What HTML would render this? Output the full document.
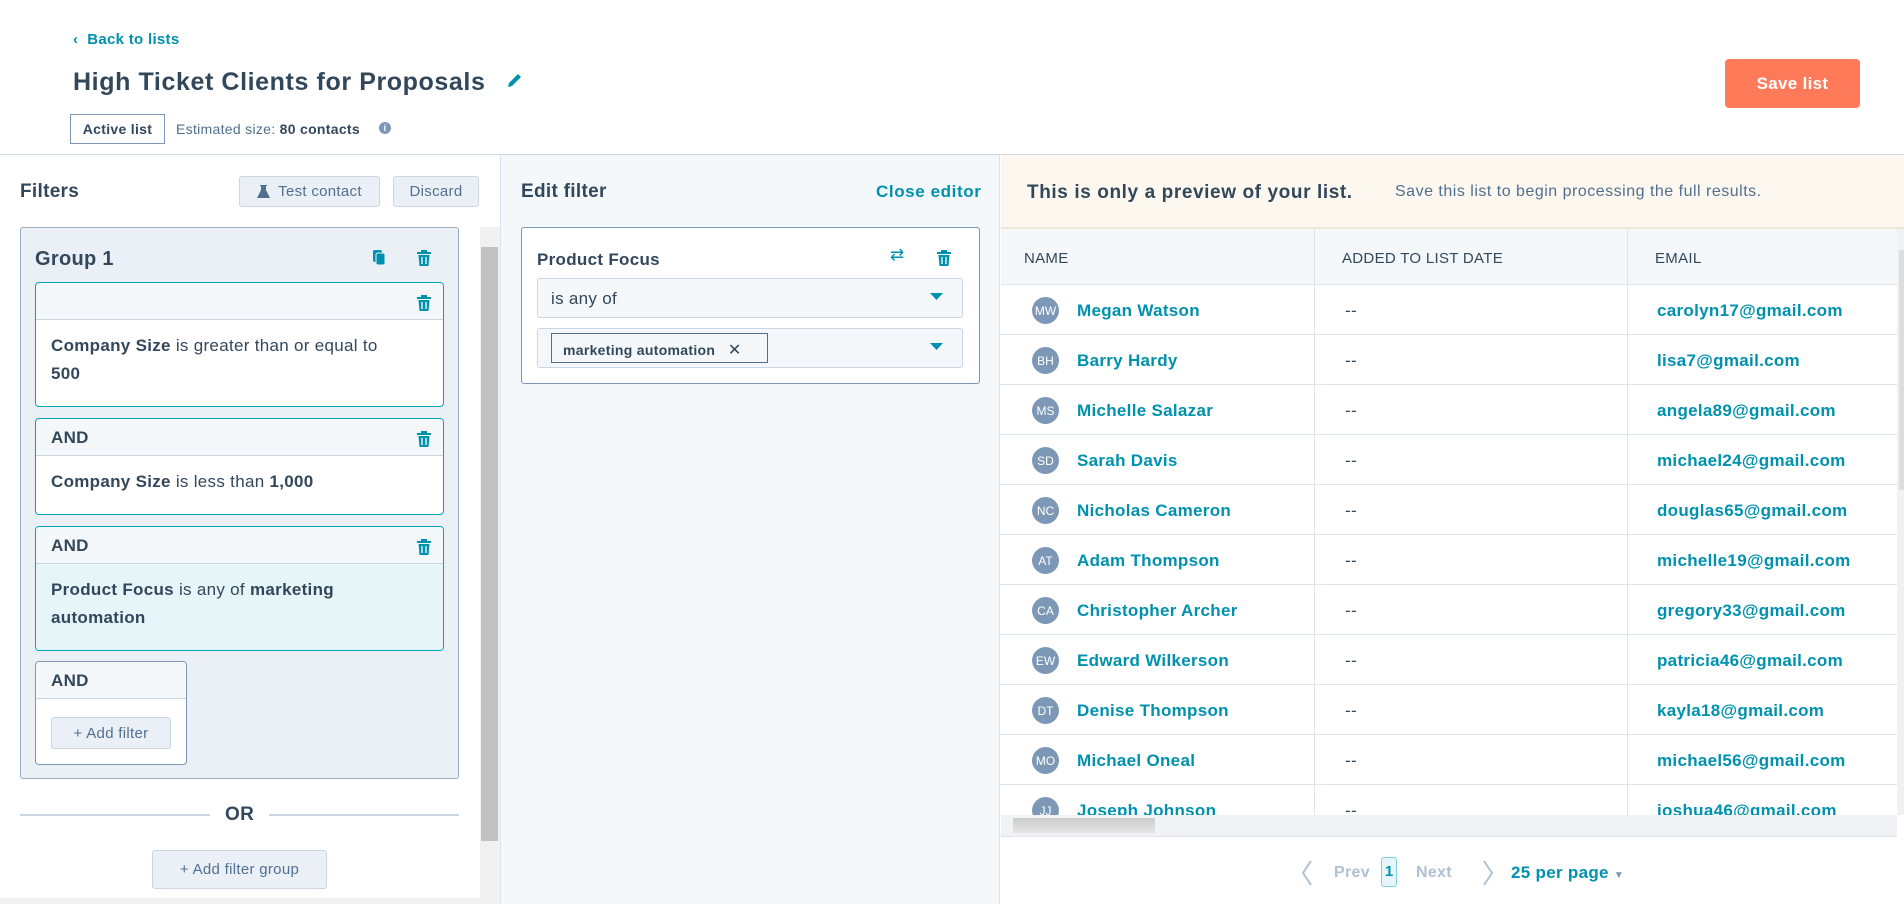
<!DOCTYPE html>
<html><head><meta charset="utf-8"><style>
*{box-sizing:border-box;margin:0;padding:0}
body{width:1904px;height:904px;overflow:hidden;background:#fff;font-family:"Liberation Sans",sans-serif;color:#33475b;position:relative;letter-spacing:0.3px}
.a{position:absolute}
.b{font-weight:bold}
.teal{color:#0091ae}
.btn{position:absolute;background:#eaf0f6;border:1px solid #cbd6e2;border-radius:3px;color:#516f90;font-size:15px;display:flex;align-items:center;justify-content:center;gap:8px}
.card{position:absolute;border:1px solid #00a4bd;border-radius:4px;background:#fff;overflow:hidden}
.card .h{height:37px;background:#f5f8fa;border-bottom:1px solid #cbd6e2;font-weight:bold;font-size:17px;padding:2px 0 0 15px;display:flex;align-items:center;justify-content:space-between}
.card .bd{padding:14px 15px;font-size:17px;line-height:28px}
.trash{width:14px;height:17px;margin-right:12px}
.row{position:absolute;left:1000px;width:897px;height:50px;border-bottom:1px solid #dfe3eb;font-size:17px}
.row .av{position:absolute;left:32px;top:12px;width:27px;height:27px;border-radius:50%;background:#7c98b6;color:#fff;font-size:12px;letter-spacing:0;display:flex;align-items:center;justify-content:center}
.row .n{position:absolute;left:77px;top:16px;font-weight:bold;color:#0091ae}
.row .d{position:absolute;left:345px;top:16px;color:#33475b}
.row .e{position:absolute;left:657px;top:16px;font-weight:bold;color:#0091ae}
.vl{position:absolute;top:229px;width:1px;height:586px;background:#dfe3eb}
</style></head><body>
<svg width="0" height="0" style="position:absolute"><defs>
<symbol id="tr" viewBox="0 0 14 17"><path d="M4 1h6v2h4v2H0V3h4z M1.5 6h11l-1 11h-9z" fill="#0091ae"/><path d="M5 8v7M9 8v7" stroke="#fff" stroke-width="1.3"/></symbol>
</defs></svg>

<!-- header -->
<div class="a teal b" style="left:73px;top:31px;font-size:15px">‹&nbsp;&nbsp;Back to lists</div>
<div class="a b" style="left:73px;top:68px;font-size:25px;color:#33475b;letter-spacing:0.6px">High Ticket Clients for Proposals</div>
<svg class="a" style="left:506px;top:72px" width="17" height="17" viewBox="0 0 17 17"><path d="M2 15l1-4 9-9 3 3-9 9z" fill="#0091ae"/></svg>
<div class="a" style="left:70px;top:114px;width:95px;height:30px;border:1px solid #7c98b6;font-size:14px;font-weight:bold;display:flex;align-items:center;justify-content:center">Active list</div>
<div class="a" style="left:176px;top:121px;font-size:14px;color:#516f90">Estimated size: <b style="color:#33475b">80 contacts</b></div>
<div class="a" style="left:379px;top:122px;width:12px;height:12px;border-radius:50%;background:#7c98b6;color:#fff;font-size:9px;text-align:center;line-height:12px;font-weight:bold">i</div>
<div class="a" style="left:1725px;top:59px;width:135px;height:49px;background:#ff7a59;border-radius:4px;color:#fff;font-weight:bold;font-size:17px;display:flex;align-items:center;justify-content:center">Save list</div>
<div class="a" style="left:0;top:154px;width:1904px;height:1px;background:#cbd6e2"></div>

<!-- left panel -->
<div class="a b" style="left:20px;top:181px;font-size:19px">Filters</div>
<div class="btn" style="left:239px;top:176px;width:141px;height:31px"><svg width="13" height="13" viewBox="0 0 13 13"><path d="M3 0h7v1H9v4l4 8H0l4-8V1H3z" fill="#516f90"/></svg>Test contact</div>
<div class="btn" style="left:393px;top:176px;width:86px;height:31px">Discard</div>
<div class="a" style="left:20px;top:227px;width:439px;height:552px;background:#eaf0f6;border:1px solid #99afc4;border-radius:3px"></div>
<div class="a b" style="left:35px;top:248px;font-size:20px">Group 1</div>
<svg class="a" style="left:373px;top:250px" width="13" height="16" viewBox="0 0 13 16"><rect x="0" y="0" width="9" height="12" rx="2" fill="#0091ae"/><rect x="3" y="3" width="9" height="12" rx="2" fill="#0091ae" stroke="#eaf0f6"/></svg>
<svg class="a" style="left:417px;top:249px" width="14" height="17"><use href="#tr"/></svg>

<div class="card" style="left:35px;top:282px;width:409px;height:125px"><div class="h"><span></span><svg class="trash"><use href="#tr"/></svg></div><div class="bd" style="padding-top:12px"><b>Company Size</b> is greater than or equal to<br><b>500</b></div></div>
<div class="card" style="left:35px;top:418px;width:409px;height:97px"><div class="h">AND<svg class="trash"><use href="#tr"/></svg></div><div class="bd" style="padding-top:12px"><b>Company Size</b> is less than <b>1,000</b></div></div>
<div class="card" style="left:35px;top:526px;width:409px;height:125px"><div class="h">AND<svg class="trash"><use href="#tr"/></svg></div><div class="bd" style="background:#e5f5f8;height:86px;padding-top:12px"><b>Product Focus</b> is any of <b>marketing<br>automation</b></div></div>
<div class="card" style="left:35px;top:661px;width:152px;height:104px;border-color:#7c98b6"><div class="h">AND</div><div class="btn" style="left:15px;top:55px;width:120px;height:32px">+ Add filter</div></div>

<div class="a" style="left:20px;top:814px;width:190px;height:2px;background:#cbd6e2"></div>
<div class="a" style="left:269px;top:814px;width:190px;height:2px;background:#cbd6e2"></div>
<div class="a b" style="left:225px;top:804px;font-size:19px">OR</div>
<div class="btn" style="left:152px;top:850px;width:175px;height:39px">+ Add filter group</div>
<div class="a" style="left:480px;top:227px;width:20px;height:677px;background:#f1f1f1"></div>
<div class="a" style="left:481px;top:247px;width:17px;height:594px;background:#c1c1c1"></div>
<div class="a" style="left:0;top:898px;width:480px;height:6px;background:#f1f1f1"></div>

<!-- middle -->
<div class="a" style="left:500px;top:155px;width:500px;height:749px;background:#f5f8fa;border-left:1px solid #dfe3eb;border-right:1px solid #dfe3eb"></div>
<div class="a b" style="left:521px;top:181px;font-size:19px">Edit filter</div>
<div class="a b teal" style="left:876px;top:182px;font-size:17px;letter-spacing:0.6px">Close editor</div>
<div class="a" style="left:521px;top:227px;width:459px;height:157px;background:#fff;border:1px solid #7c98b6;border-radius:3px"></div>
<div class="a b" style="left:537px;top:250px;font-size:17px">Product Focus</div>
<div class="a teal" style="left:890px;top:245px;font-size:17px">⇄</div>
<svg class="a" style="left:937px;top:249px" width="14" height="17"><use href="#tr"/></svg>
<div class="a" style="left:537px;top:278px;width:426px;height:40px;background:#f5f8fa;border:1px solid #cbd6e2;border-radius:3px;font-size:17px;padding:10px 0 0 13px">is any of</div>
<div class="a" style="left:537px;top:328px;width:426px;height:40px;background:#f5f8fa;border:1px solid #cbd6e2;border-radius:3px"></div>
<div class="a" style="left:551px;top:333px;width:217px;height:30px;border:1px solid #516f90;background:#f5f8fa;font-size:14px;font-weight:bold;padding:6px 0 0 11px">marketing automation&nbsp;&nbsp;&nbsp;<span style="font-weight:normal;font-size:16px">✕</span></div>
<svg class="a" style="left:930px;top:293px" width="13" height="8"><path d="M0 0h13L6.5 7z" fill="#0091ae"/></svg>
<svg class="a" style="left:930px;top:343px" width="13" height="8"><path d="M0 0h13L6.5 7z" fill="#0091ae"/></svg>

<!-- right -->
<div class="a" style="left:1001px;top:155px;width:903px;height:74px;background:#fcf8ef;border-bottom:2px solid #eee6d6"></div>
<div class="a b" style="left:1027px;top:182px;font-size:19px;letter-spacing:0.6px">This is only a preview of your list.</div>
<div class="a" style="left:1395px;top:183px;font-size:16px;color:#516f90;letter-spacing:0.5px">Save this list to begin processing the full results.</div>
<div class="a" style="left:1001px;top:229px;width:896px;height:56px;background:#f5f8fa;border-bottom:1px solid #dfe3eb"></div>
<div class="a" style="left:1024px;top:250px;font-size:15px">NAME</div>
<div class="a" style="left:1342px;top:250px;font-size:15px">ADDED TO LIST DATE</div>
<div class="a" style="left:1655px;top:250px;font-size:15px">EMAIL</div>

<div class="row" style="top:285px"><div class="av">MW</div><div class="n">Megan Watson</div><div class="d">--</div><div class="e">carolyn17@gmail.com</div></div>
<div class="row" style="top:335px"><div class="av">BH</div><div class="n">Barry Hardy</div><div class="d">--</div><div class="e">lisa7@gmail.com</div></div>
<div class="row" style="top:385px"><div class="av">MS</div><div class="n">Michelle Salazar</div><div class="d">--</div><div class="e">angela89@gmail.com</div></div>
<div class="row" style="top:435px"><div class="av">SD</div><div class="n">Sarah Davis</div><div class="d">--</div><div class="e">michael24@gmail.com</div></div>
<div class="row" style="top:485px"><div class="av">NC</div><div class="n">Nicholas Cameron</div><div class="d">--</div><div class="e">douglas65@gmail.com</div></div>
<div class="row" style="top:535px"><div class="av">AT</div><div class="n">Adam Thompson</div><div class="d">--</div><div class="e">michelle19@gmail.com</div></div>
<div class="row" style="top:585px"><div class="av">CA</div><div class="n">Christopher Archer</div><div class="d">--</div><div class="e">gregory33@gmail.com</div></div>
<div class="row" style="top:635px"><div class="av">EW</div><div class="n">Edward Wilkerson</div><div class="d">--</div><div class="e">patricia46@gmail.com</div></div>
<div class="row" style="top:685px"><div class="av">DT</div><div class="n">Denise Thompson</div><div class="d">--</div><div class="e">kayla18@gmail.com</div></div>
<div class="row" style="top:735px"><div class="av">MO</div><div class="n">Michael Oneal</div><div class="d">--</div><div class="e">michael56@gmail.com</div></div>
<div class="row" style="top:785px"><div class="av">JJ</div><div class="n">Joseph Johnson</div><div class="d">--</div><div class="e">joshua46@gmail.com</div></div>
<div class="vl" style="left:1314px"></div>
<div class="vl" style="left:1627px"></div>
<div class="a" style="left:1001px;top:815px;width:903px;height:89px;background:#fff"></div>
<div class="a" style="left:1001px;top:815px;width:896px;height:22px;background:#f0f2f5;border-bottom:1px solid #dfe3eb"></div>
<div class="a" style="left:1013px;top:818px;width:142px;height:15px;background:linear-gradient(#ccc,#e5e5e5)"></div>
<div class="a" style="left:1897px;top:229px;width:7px;height:586px;background:#f1f1f1"></div>
<div class="a" style="left:1899px;top:250px;width:5px;height:240px;background:#ddd"></div>
<svg class="a" style="left:1301px;top:860px" width="12" height="26"><path d="M10 1L2 13l8 12" fill="none" stroke="#b0c1d4" stroke-width="2"/></svg>
<div class="a b" style="left:1334px;top:864px;font-size:16px;color:#b0c1d4">Prev</div>
<div class="a b teal" style="left:1381px;top:857px;width:16px;height:30px;border:1px solid #7fd1de;background:#e5f5f8;border-radius:3px;font-size:15px;text-align:center;line-height:28px;letter-spacing:0">1</div>
<div class="a b" style="left:1416px;top:864px;font-size:16px;color:#b0c1d4">Next</div>
<svg class="a" style="left:1482px;top:860px" width="12" height="26"><path d="M2 1l8 12-8 12" fill="none" stroke="#b0c1d4" stroke-width="2"/></svg>
<div class="a b teal" style="left:1511px;top:863px;font-size:17px">25 per page <span style="font-size:10px;color:#7c98b6">▼</span></div>
</body></html>
